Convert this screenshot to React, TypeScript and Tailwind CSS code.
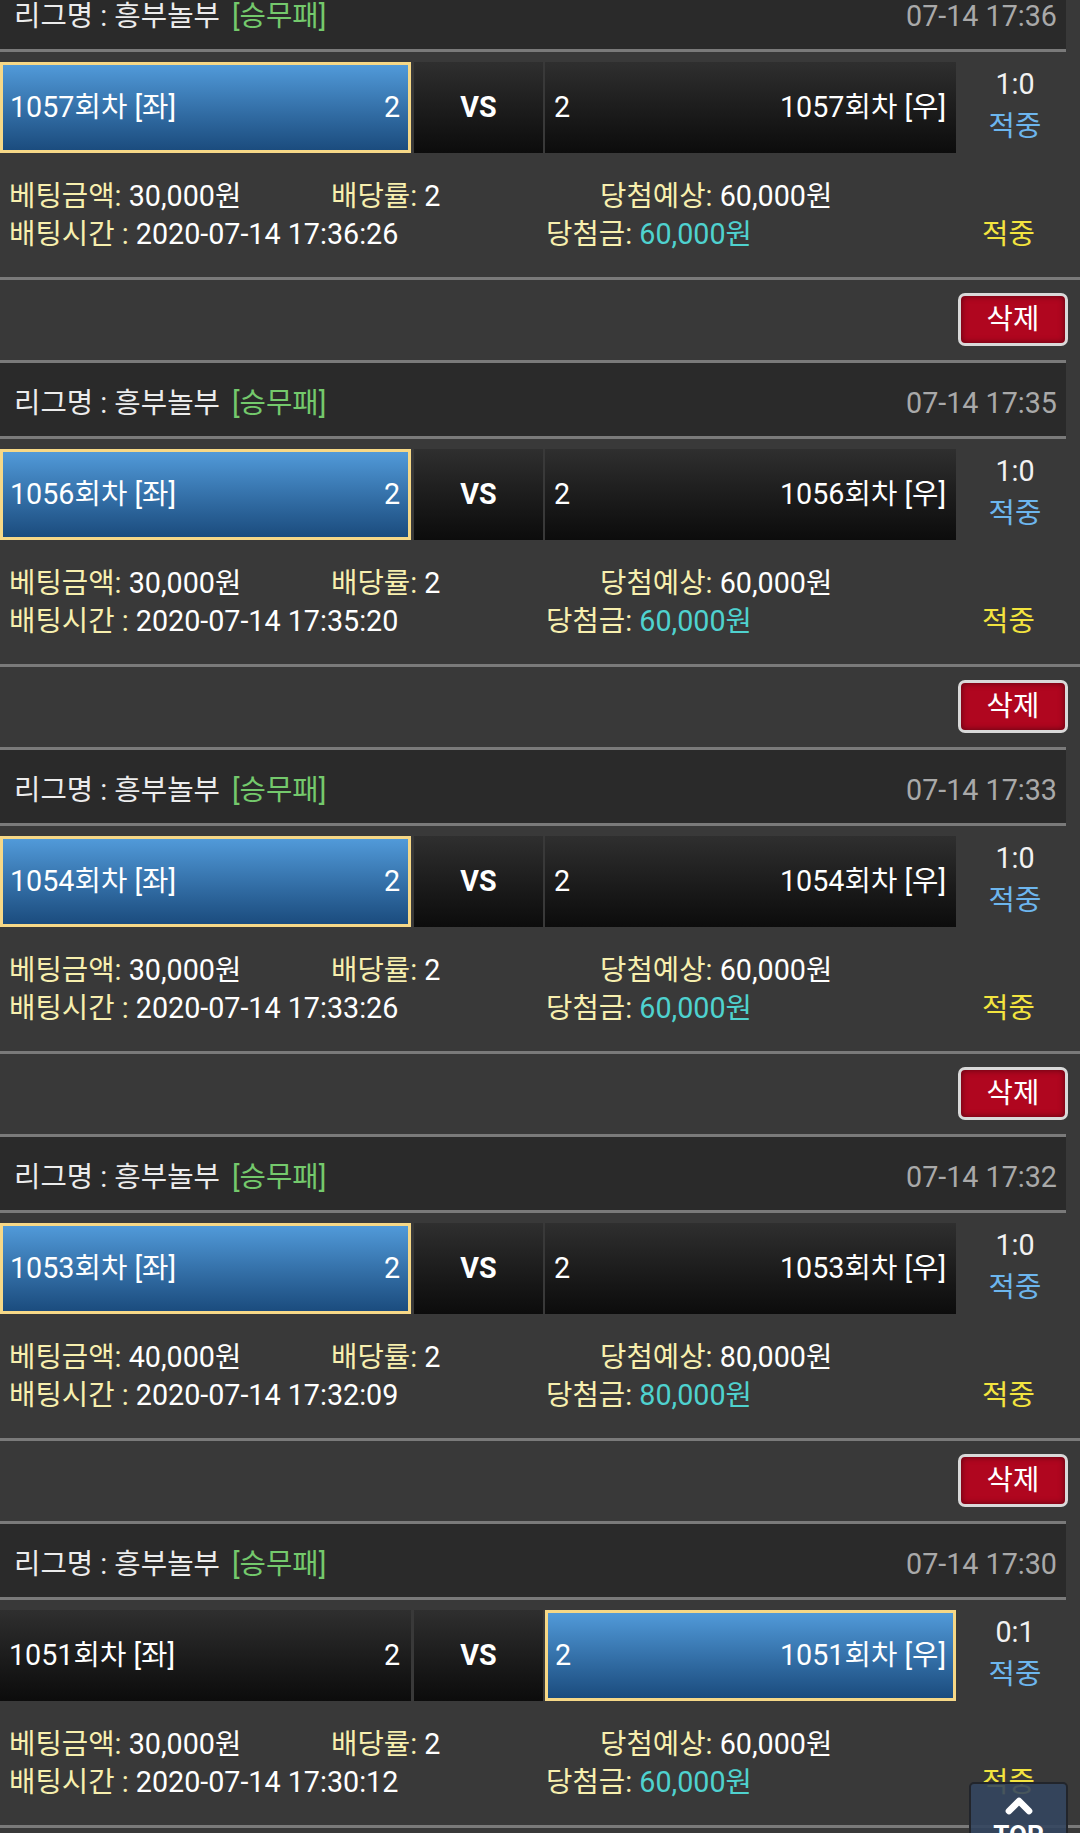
import { ChevronUp } from 'lucide-react';

interface Bet {
  round: string;
  time: string;
  pick: 'left' | 'right';
  amount: string;
  expected: string;
  betTime: string;
  win: string;
  score: string;
}

const bets: Bet[] = [
  { round: '1057', time: '07-14 17:36', pick: 'left', amount: '30,000원', expected: '60,000원', betTime: '2020-07-14 17:36:26', win: '60,000원', score: '1:0' },
  { round: '1056', time: '07-14 17:35', pick: 'left', amount: '30,000원', expected: '60,000원', betTime: '2020-07-14 17:35:20', win: '60,000원', score: '1:0' },
  { round: '1054', time: '07-14 17:33', pick: 'left', amount: '30,000원', expected: '60,000원', betTime: '2020-07-14 17:33:26', win: '60,000원', score: '1:0' },
  { round: '1053', time: '07-14 17:32', pick: 'left', amount: '40,000원', expected: '80,000원', betTime: '2020-07-14 17:32:09', win: '80,000원', score: '1:0' },
  { round: '1051', time: '07-14 17:30', pick: 'right', amount: '30,000원', expected: '60,000원', betTime: '2020-07-14 17:30:12', win: '60,000원', score: '0:1' },
];

// selected / unselected team cell styles
const picked =
  'border-[3px] border-[#f6d887] bg-gradient-to-b from-[#519ad9] to-[#1b4c7e]';
const idle = 'bg-gradient-to-b from-[#2f2f2f] to-[#0c0c0c]';

function BetBlock({ bet }: { bet: Bet }) {
  const leftOn = bet.pick === 'left';
  return (
    <div>
      {/* League header */}
      <div className="w-[1066px] h-[79px] border-y-[3px] border-[#7a7a7a] bg-[#2a2a2a] flex items-center justify-between pl-[14px] pr-[9px] pt-[9px]">
        <div className="text-[#ececec]">
          리그명 : 흥부놀부
          <span className="ml-[12px] text-[#74c96c]">[승무패]</span>
        </div>
        <div className="text-[#a9a9a9]">{bet.time}</div>
      </div>

      {/* Match row */}
      <div className="pt-[10px] flex h-[101px]">
        <div
          className={`w-[411px] h-[91px] flex items-center justify-between ${
            leftOn ? `${picked} pl-[7px] pr-[8px]` : `${idle} pl-[9px] pr-[11px]`
          }`}
        >
          <span>{bet.round}회차 [좌]</span>
          <span>2</span>
        </div>
        <div className={`ml-[3px] w-[129px] h-[91px] flex items-center justify-center font-bold ${idle}`}>
          VS
        </div>
        <div
          className={`ml-[2px] w-[411px] h-[91px] flex items-center justify-between ${
            !leftOn ? `${picked} pl-[7px] pr-[7px]` : `${idle} pl-[9px] pr-[10px]`
          }`}
        >
          <span>2</span>
          <span>{bet.round}회차 [우]</span>
        </div>
        <div className="w-[118px] flex flex-col items-center pt-[1px] leading-[42px]">
          <span className="text-[#f2f2f2]">{bet.score}</span>
          <span className="text-[#6db6ee]">적중</span>
        </div>
      </div>

      {/* Bet info */}
      <div className="h-[124px] pt-[24px] pl-[9px] leading-[38px]">
        <div className="flex">
          <div className="w-[322px]">
            <span className="text-[#f7efae]">베팅금액:</span> {bet.amount}
          </div>
          <div className="w-[269px]">
            <span className="text-[#f7efae]">배당률:</span> 2
          </div>
          <div>
            <span className="text-[#f7efae]">당첨예상:</span> {bet.expected}
          </div>
        </div>
        <div className="flex">
          <div className="w-[537px]">
            <span className="text-[#f7efae]">배팅시간 :</span> {bet.betTime}
          </div>
          <div className="w-[436px]">
            <span className="text-[#f7efae]">당첨금:</span>{' '}
            <span className="text-[#4fd2cf]">{bet.win}</span>
          </div>
          <div className="text-[#f3e43f]">적중</div>
        </div>
      </div>

      {/* Delete row */}
      <div className="border-t-[3px] border-[#7a7a7a] h-[83px] flex justify-end items-start pt-[13px] pr-[12px]">
        <button className="w-[110px] h-[53px] rounded-[7px] border-[3px] border-[#d9d9d9] bg-[#b0061f] shadow-[inset_0_0_6px_rgba(0,0,0,0.5)] text-white flex items-center justify-center">
          삭제
        </button>
      </div>
    </div>
  );
}

export default function App() {
  return (
    <div className="relative w-[1080px] h-[1833px] overflow-hidden bg-[#393939] text-white text-[28.7px] font-[Roboto,'Noto_Sans_CJK_KR',sans-serif]">
      <div className="-mt-[27px]">
        {bets.map((b) => (
          <BetBlock key={b.round} bet={b} />
        ))}
      </div>

      {/* Scroll to top button */}
      <div className="absolute left-[969px] top-[1782px] w-[99px] h-[70px] rounded-t-[5px] border-2 border-[#22252b] bg-[#34465f]/90 flex flex-col items-center pt-[2px]">
        <ChevronUp className="w-[40px] h-[40px] text-white" strokeWidth={4} />
        <span className="text-[26px] font-bold text-white leading-none -mt-[4px]">TOP</span>
      </div>
    </div>
  );
}
